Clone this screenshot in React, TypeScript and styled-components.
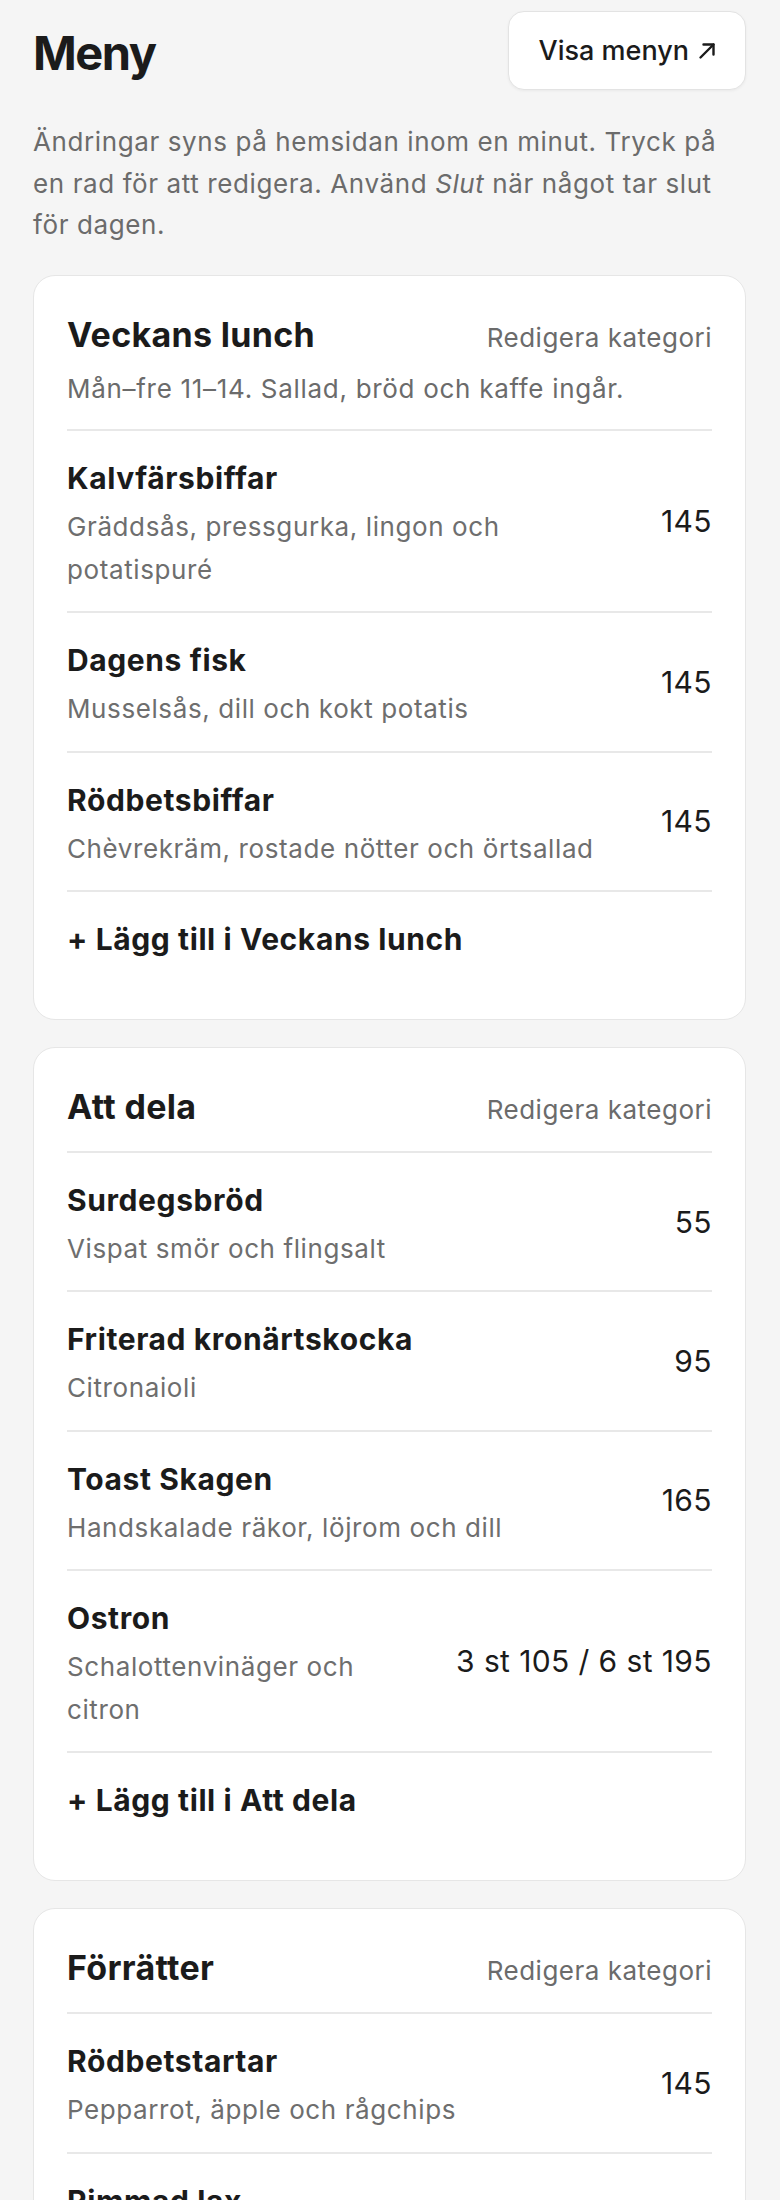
import React from "react";
import styled, { createGlobalStyle } from "styled-components";

const GlobalStyle = createGlobalStyle`
  * { box-sizing: border-box; }
  body {
    margin: 0;
    background: #f5f5f5;
    font-family: Inter, "Noto Sans", "Liberation Sans", sans-serif;
    color: #1b1b1b;
  }
`;

type Item = { name: string; desc: string; price: string };
type Category = { title: string; note?: string; items: Item[] };

const categories: Category[] = [
  {
    title: "Veckans lunch",
    note: "Mån–fre 11–14. Sallad, bröd och kaffe ingår.",
    items: [
      { name: "Kalvfärsbiffar", desc: "Gräddsås, pressgurka, lingon och potatispuré", price: "145" },
      { name: "Dagens fisk", desc: "Musselsås, dill och kokt potatis", price: "145" },
      { name: "Rödbetsbiffar", desc: "Chèvrekräm, rostade nötter och örtsallad", price: "145" },
    ],
  },
  {
    title: "Att dela",
    items: [
      { name: "Surdegsbröd", desc: "Vispat smör och flingsalt", price: "55" },
      { name: "Friterad kronärtskocka", desc: "Citronaioli", price: "95" },
      { name: "Toast Skagen", desc: "Handskalade räkor, löjrom och dill", price: "165" },
      { name: "Ostron", desc: "Schalottenvinäger och citron", price: "3 st 105 / 6 st 195" },
    ],
  },
  {
    title: "Förrätter",
    items: [
      { name: "Rödbetstartar", desc: "Pepparrot, äpple och rågchips", price: "145" },
      { name: "Rimmad lax", desc: "Senapssås, dill och rågbröd", price: "155" },
    ],
  },
];

const Page = styled.main`
  padding: 11px 34px 40px 33px;
`;

const Header = styled.header`
  display: flex;
  align-items: center;
  justify-content: space-between;
`;

const Title = styled.h1`
  margin: 5px 0 0;
  font-size: 47px;
  font-weight: 700;
  letter-spacing: -1.5px;
  line-height: 1.2;
`;

const ViewButton = styled.button`
  height: 79px;
  padding: 0 29px 0 30px;
  background: #fff;
  border: 1.5px solid #e3e3e3;
  border-radius: 16px;
  box-shadow: 0 1px 3px rgba(0, 0, 0, 0.05);
  font-family: inherit;
  font-size: 27px;
  font-weight: 500;
  color: #1b1b1b;
  display: flex;
  align-items: center;
  gap: 9px;
`;

const ArrowIcon = () => (
  <svg width="18" height="18" viewBox="0 0 18 18" fill="none" stroke="#1b1b1b" strokeWidth="2.4" strokeLinecap="round" strokeLinejoin="round">
    <path d="M2.5 15.5 15.5 2.5" />
    <path d="M5.5 2.5h10v10" />
  </svg>
);

const Intro = styled.p`
  margin: 31px 0 29px;
  font-size: 26px;
  line-height: 41.6px;
  letter-spacing: 0.6px;
  color: #6b6b6b;

  em { font-style: italic; }
`;

const CardList = styled.div`
  display: flex;
  flex-direction: column;
  gap: 27px;
`;

const Card = styled.section`
  background: #fff;
  border: 1.5px solid #e6e6e6;
  border-radius: 22px;
  padding: 0 33px 33px;
`;

const CardHeader = styled.div`
  padding: 37px 0 22px;
`;

const HeaderRow = styled.div`
  display: flex;
  align-items: baseline;
  justify-content: space-between;
`;

const CategoryTitle = styled.h2`
  margin: 0;
  font-size: 34px;
  font-weight: 700;
  line-height: 44px;
  letter-spacing: 0.3px;
`;

const EditLink = styled.button`
  background: none;
  border: 0;
  padding: 0;
  font-family: inherit;
  font-size: 26px;
  letter-spacing: 0.5px;
  color: #6b6b6b;
`;

const CategoryNote = styled.p`
  margin: 14px 0 0;
  font-size: 26px;
  line-height: 36px;
  letter-spacing: 0.7px;
  color: #6b6b6b;
`;

const ItemRow = styled.div`
  display: flex;
  align-items: center;
  gap: 32px;
  padding: 20px 0;
  border-top: 2px solid #e8e8e8;
`;

const ItemText = styled.div`
  flex: 1;
  min-width: 0;
`;

const ItemName = styled.div`
  font-size: 30px;
  font-weight: 700;
  line-height: 54px;
  letter-spacing: 0.6px;
`;

const ItemDesc = styled.div`
  font-size: 26px;
  line-height: 43.3px;
  letter-spacing: 0.6px;
  color: #6e6e6e;
`;

const Price = styled.div`
  font-size: 30px;
  letter-spacing: 0.4px;
  white-space: nowrap;
  color: #1b1b1b;
`;

const AddRow = styled.button`
  display: block;
  width: 100%;
  text-align: left;
  background: none;
  border: 0;
  border-top: 2px solid #e8e8e8;
  padding: 20px 0;
  font-family: inherit;
  font-size: 30px;
  font-weight: 700;
  line-height: 54px;
  letter-spacing: 0.6px;
  color: #1b1b1b;
`;

export default function App() {
  return (
    <>
      <GlobalStyle />
      <Page>
        <Header>
          <Title>Meny</Title>
          <ViewButton>
            Visa menyn <ArrowIcon />
          </ViewButton>
        </Header>
        <Intro>
          Ändringar syns på hemsidan inom en minut. Tryck på en rad för att redigera. Använd <em>Slut</em> när något tar slut för dagen.
        </Intro>
        <CardList>
          {categories.map((cat) => (
            <Card key={cat.title}>
              <CardHeader>
                <HeaderRow>
                  <CategoryTitle>{cat.title}</CategoryTitle>
                  <EditLink>Redigera kategori</EditLink>
                </HeaderRow>
                {cat.note && <CategoryNote>{cat.note}</CategoryNote>}
              </CardHeader>
              {cat.items.map((item) => (
                <ItemRow key={item.name}>
                  <ItemText>
                    <ItemName>{item.name}</ItemName>
                    <ItemDesc>{item.desc}</ItemDesc>
                  </ItemText>
                  <Price>{item.price}</Price>
                </ItemRow>
              ))}
              <AddRow>+ Lägg till i {cat.title}</AddRow>
            </Card>
          ))}
        </CardList>
      </Page>
    </>
  );
}
